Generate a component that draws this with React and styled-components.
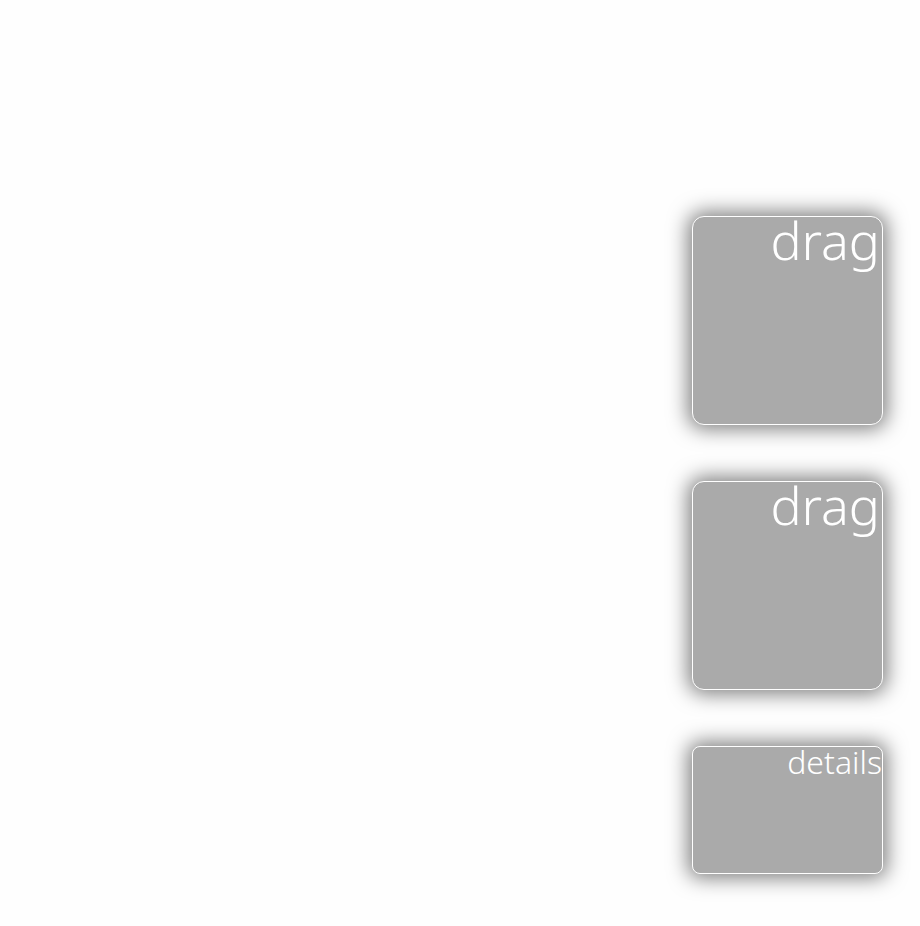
import React from "react";
import styled, { createGlobalStyle } from "styled-components";

const GlobalStyle = createGlobalStyle`
  * { box-sizing: border-box; }
  body { margin: 0; background: #fefefe; }
`;

const Page = styled.main`
  min-height: 100vh;
  display: flex;
  flex-direction: column;
  align-items: flex-end;
  gap: 56px;
  padding: 216px 37px 52px;
`;

const Tile = styled.section`
  width: 191px;
  height: ${(p) => (p.$compact ? 128 : 209)}px;
  padding: 0 ${(p) => (p.$compact ? 0 : 2)}px;
  border: 1px solid #fff;
  border-radius: ${(p) => (p.$compact ? 8 : 12)}px;
  background: #aaa;
  box-shadow: 0 0 20px 4px rgba(0, 0, 0, 0.5);
`;

const Label = styled.h2`
  margin: 0;
  color: #fff;
  font-family: "Noto Sans", "Open Sans", sans-serif;
  font-weight: 300;
  font-size: ${(p) => (p.$compact ? 32 : 52)}px;
  line-height: ${(p) => (p.$compact ? 30 : 46)}px;
  text-align: right;
`;

export default function App() {
  return (
    <Page>
      <GlobalStyle />
      <Tile><Label>drag</Label></Tile>
      <Tile><Label>drag</Label></Tile>
      <Tile $compact><Label $compact>details</Label></Tile>
    </Page>
  );
}
